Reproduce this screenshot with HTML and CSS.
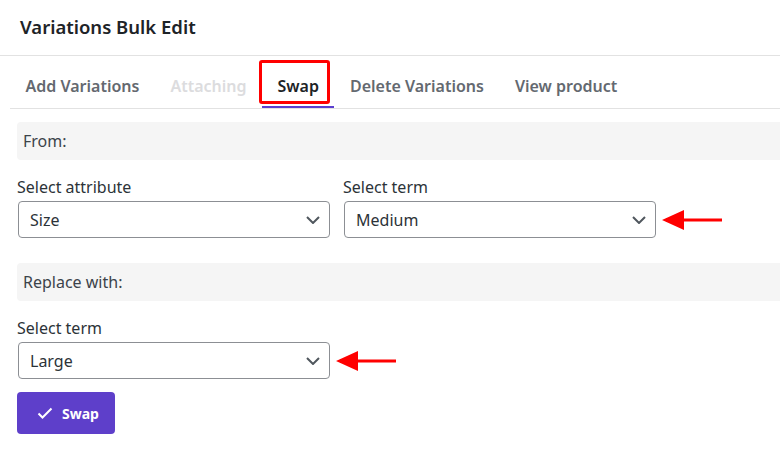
FILE: index.html
```html
<!DOCTYPE html>
<html lang="en">
	<head>
		<meta charset="utf-8">
		<title>Variations Bulk Edit</title>
		<link rel="stylesheet" href="styles.css">
	</head>
	<body>
		<header class="panel-head">
			<h1>Variations Bulk Edit</h1>
		</header>

		<nav class="tabs">
			<a class="tab">Add Variations</a>
			<a class="tab tab--disabled">Attaching</a>
			<a class="tab tab--active">Swap<span class="mark" aria-hidden="true"></span></a>
			<a class="tab">Delete Variations</a>
			<a class="tab">View product</a>
		</nav>

		<main class="swap">
			<div class="section-title">From:</div>

			<div class="fields">
				<div class="field">
					<label>Select attribute</label>
					<div class="field__row">
						<div class="select">Size</div>
					</div>
				</div>
				<div class="field">
					<label>Select term</label>
					<div class="field__row">
						<div class="select">Medium</div>
						<svg class="arrow" width="60" height="22" viewBox="0 0 60 22" aria-hidden="true"><path d="M0 11 L22 1 L22 9.5 L60 9.5 L60 12.5 L22 12.5 L22 21 Z" fill="#f00"/></svg>
					</div>
				</div>
			</div>

			<div class="section-title">Replace with:</div>

			<div class="fields">
				<div class="field">
					<label>Select term</label>
					<div class="field__row">
						<div class="select">Large</div>
						<svg class="arrow" width="60" height="22" viewBox="0 0 60 22" aria-hidden="true"><path d="M0 11 L22 1 L22 9.5 L60 9.5 L60 12.5 L22 12.5 L22 21 Z" fill="#f00"/></svg>
					</div>
				</div>
			</div>

			<button class="btn-primary">
				<svg width="16" height="12" viewBox="0 0 16 12" aria-hidden="true"><path d="M1.5 6.5 L5.5 10.5 L14.5 1.5" fill="none" stroke="#fff" stroke-width="2"/></svg>
				Swap
			</button>
		</main>
	</body>
</html>
```

FILE: styles.css
```css
* {
	box-sizing: border-box;
}
body {
	font-family: 'Noto Sans', sans-serif;
	margin: 0;
	overflow: hidden;
	color: #2c3338;
}

/* header */
.panel-head {
	border-bottom: 1px solid #e2e2e2;
	height: 56px;
	padding: 15px 20px 0;
}
.panel-head h1 {
	color: #1d2327;
	font-size: 18.5px;
	font-weight: 600;
	line-height: 24px;
	margin: 0;
}

/* tabs */
.tabs {
	border-bottom: 1px solid #e2e2e2;
	display: flex;
	height: 53px;
	margin-left: 10px;
}
.tab {
	border-bottom: 2px solid transparent;
	color: #646970;
	font-size: 16px;
	font-weight: 600;
	line-height: 24px;
	padding: 18px 15.5px 0;
	position: relative;
}
.tab--disabled {
	color: #dcdcde;
}
.tab--active {
	border-bottom-color: #5b3fcf;
	color: #1d2327;
}
.mark {
	border: 3px solid #f00;
	border-radius: 3px;
	height: 44px;
	left: -3px;
	position: absolute;
	top: 4px;
	width: 71px;
}

/* form */
.swap {
	padding: 13px 17px;
	width: 800px;
}
.section-title {
	background: #f5f5f5;
	border-radius: 4px;
	color: #3c434a;
	font-size: 16px;
	height: 38px;
	line-height: 38px;
	padding-left: 6px;
}
.fields {
	display: flex;
	gap: 13px;
	margin: 16px 0 25px;
}
.field label {
	display: block;
	font-size: 16px;
	line-height: 23px;
	margin-bottom: 2px;
}
.field__row {
	align-items: center;
	display: flex;
	gap: 6px;
}
.select {
	background: #fff url("data:image/svg+xml,%3Csvg xmlns='http://www.w3.org/2000/svg' width='14' height='8'%3E%3Cpath d='M1 1l6 6 6-6' fill='none' stroke='%2350575e' stroke-width='2'/%3E%3C/svg%3E") right 9px center no-repeat;
	border: 1px solid #8c8f94;
	border-radius: 4px;
	font-size: 16px;
	height: 37px;
	line-height: 37px;
	margin-left: 1px;
	padding-left: 11px;
	width: 312px;
}
.btn-primary {
	align-items: center;
	background: #5e3fca;
	border: none;
	border-radius: 4px;
	color: #fff;
	display: flex;
	font-family: inherit;
	font-size: 14px;
	font-weight: 700;
	gap: 9px;
	height: 42px;
	margin-top: -12px;
	padding: 0 16px 0 20px;
}
```
